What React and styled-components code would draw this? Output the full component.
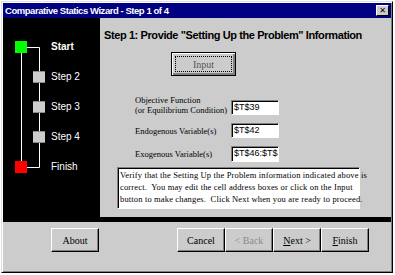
import React from 'react';
import styled, { createGlobalStyle } from 'styled-components';

const GlobalStyle = createGlobalStyle`
  body {
    margin: 0;
    background: #ffffff;
  }
`;

const Window = styled.div`
  box-sizing: border-box;
  margin: 1px 0 0 1px;
  width: 392px;
  height: 272px;
  padding: 1px;
  display: flex;
  flex-direction: column;
  background: #cccccc;
  border: 1px solid;
  border-color: #dfdfdf #000000 #000000 #dfdfdf;
  box-shadow: inset 1px 1px #ffffff, inset -1px -1px #808080;
`;

const TitleBar = styled.div`
  height: 15px;
  display: flex;
  align-items: center;
  justify-content: space-between;
  padding: 0 2px;
  background: #000080;
  color: #ffffff;
  font-family: 'Liberation Sans', Arial, sans-serif;
  font-weight: bold;
  font-size: 9.5px;
  letter-spacing: -0.45px;
`;

const CloseButton = styled.div`
  box-sizing: border-box;
  width: 13px;
  height: 11px;
  display: flex;
  align-items: center;
  justify-content: center;
  background: #cccccc;
  color: #000000;
  font-family: 'DejaVu Sans', sans-serif;
  font-size: 8px;
  line-height: 1;
  letter-spacing: 0;
  border: 1px solid;
  border-color: #ffffff #000000 #000000 #ffffff;
`;

const Body = styled.div`
  display: flex;
  height: 204px;
`;

const Sidebar = styled.div`
  width: 97px;
  background: #000000;
  display: flex;
  padding-top: 14px;
  box-sizing: border-box;
`;

const Labels = styled.div`
  display: flex;
  flex-direction: column;
`;

const StepLabel = styled.div`
  height: 30px;
  line-height: 30px;
  color: #ffffff;
  font-family: 'Liberation Sans', Arial, sans-serif;
  font-size: 10px;
  font-weight: ${(p) => (p.$active ? 'bold' : 'normal')};
`;

const Main = styled.div`
  flex: 1;
  display: flex;
  flex-direction: column;
  align-items: flex-start;
  border-bottom: 5px solid #000000;
`;

const Heading = styled.div`
  margin: 11px 0 0 4px;
  height: 12px;
  line-height: 12px;
  font-family: 'Liberation Sans', Arial, sans-serif;
  font-weight: bold;
  font-size: 11px;
  letter-spacing: -0.4px;
  color: #000000;
  white-space: nowrap;
`;

const Button = styled.button`
  box-sizing: border-box;
  width: ${(p) => p.$w || 48}px;
  height: 24px;
  padding: 0;
  background: #cccccc;
  border: 1px solid;
  border-color: #ffffff #000000 #000000 #ffffff;
  box-shadow: inset -1px -1px #808080;
  font-family: 'Liberation Serif', 'Times New Roman', serif;
  font-size: 10px;
  color: ${(p) => (p.disabled ? '#8a8a8a' : '#000000')};
  u {
    text-decoration: underline;
  }
`;

const InputButton = styled(Button)`
  margin: 11px 0 0 71px;
  border-color: #000000;
  box-shadow: inset 1px 1px #ffffff, inset -2px -2px #808080;
  color: #555555;
  display: flex;
  align-items: center;
  justify-content: center;
`;

const Focus = styled.span`
  display: flex;
  align-items: center;
  justify-content: center;
  width: 55px;
  height: 14px;
  border: 1px dotted #000000;
`;

const Form = styled.div`
  display: flex;
  flex-direction: column;
  gap: 8px;
  margin: 19px 0 0 35px;
`;

const FieldRow = styled.div`
  display: flex;
  align-items: ${(p) => (p.$bottom ? 'flex-end' : 'center')};
`;

const FieldLabel = styled.div`
  width: 96px;
  font-family: 'Liberation Serif', 'Times New Roman', serif;
  font-size: 8.5px;
  line-height: 10px;
  color: #000000;
  white-space: nowrap;
`;

const CellBox = styled.div`
  box-sizing: border-box;
  width: 48px;
  height: ${(p) => p.$h || 15}px;
  padding: 0 2px;
  overflow: hidden;
  white-space: nowrap;
  background: #ffffff;
  border: 1px solid;
  border-color: #808080 #ffffff #ffffff #808080;
  box-shadow: inset 1px 1px #000000;
  font-family: 'Liberation Sans', Arial, sans-serif;
  font-size: 9px;
  line-height: 13px;
`;

const Notes = styled.div`
  box-sizing: border-box;
  margin: 5px 0 0 17px;
  width: 243px;
  height: 42px;
  padding: 1px 1px 0 2px;
  background: #ffffff;
  border: 1px solid;
  border-color: #808080 #ffffff #ffffff #808080;
  box-shadow: inset 1px 1px #000000;
  font-family: 'Liberation Serif', 'Times New Roman', serif;
  font-size: 8.5px;
  letter-spacing: 0.15px;
  line-height: 12px;
  color: #000000;
  white-space: nowrap;
`;

const Footer = styled.div`
  flex: 1;
  display: flex;
  justify-content: space-between;
  align-items: flex-start;
  padding: 6px 22px 0 48px;
`;

const ButtonGroup = styled.div`
  display: flex;
`;

function StepDiagram() {
  const gray = [45, 75, 105];
  return (
    <svg width="48" height="150" viewBox="0 0 48 150">
      <g stroke="#ffffff" strokeWidth="1" fill="none">
        <path d="M18.5 21 V129" />
        <path d="M24 15.5 H36.5 V135.5 H24" />
      </g>
      <rect x="12" y="9" width="12" height="12" fill="#00ff00" />
      {gray.map((y) => (
        <g key={y}>
          <rect x="30" y={y - 6} width="12" height="12" fill="#cccccc" />
          <rect x="30" y={y - 6} width="12" height="1" fill="#8c8c8c" />
          <rect x="30" y={y + 5} width="12" height="1" fill="#8c8c8c" />
        </g>
      ))}
      <rect x="12" y="129" width="12" height="12" fill="#ff0000" />
    </svg>
  );
}

export default function App() {
  return (
    <>
      <GlobalStyle />
      <Window>
        <TitleBar>
          <span>Comparative Statics Wizard - Step 1 of 4</span>
          <CloseButton>✕</CloseButton>
        </TitleBar>
        <Body>
          <Sidebar>
            <StepDiagram />
            <Labels>
              <StepLabel $active>Start</StepLabel>
              <StepLabel>Step 2</StepLabel>
              <StepLabel>Step 3</StepLabel>
              <StepLabel>Step 4</StepLabel>
              <StepLabel>Finish</StepLabel>
            </Labels>
          </Sidebar>
          <Main>
            <Heading>Step 1: Provide "Setting Up the Problem" Information</Heading>
            <InputButton $w={65}>
              <Focus>Input</Focus>
            </InputButton>
            <Form>
              <FieldRow $bottom>
                <FieldLabel>
                  Objective Function
                  <br />
                  (or Equilibrium Condition)
                </FieldLabel>
                <CellBox>$T$39</CellBox>
              </FieldRow>
              <FieldRow>
                <FieldLabel>Endogenous Variable(s)</FieldLabel>
                <CellBox>$T$42</CellBox>
              </FieldRow>
              <FieldRow>
                <FieldLabel>Exogenous Variable(s)</FieldLabel>
                <CellBox $h={16}>$T$46:$T$48</CellBox>
              </FieldRow>
            </Form>
            <Notes>
              Verify that the Setting Up the Problem information indicated above is
              <br />
              correct.&nbsp; You may edit the cell address boxes or click on the Input
              <br />
              button to make changes.&nbsp; Click Next when you are ready to proceed.
            </Notes>
          </Main>
        </Body>
        <Footer>
          <Button>About</Button>
          <ButtonGroup>
            <Button>Cancel</Button>
            <Button disabled>&lt; Back</Button>
            <Button>
              <u>N</u>ext &gt;
            </Button>
            <Button>
              <u>F</u>inish
            </Button>
          </ButtonGroup>
        </Footer>
      </Window>
    </>
  );
}
